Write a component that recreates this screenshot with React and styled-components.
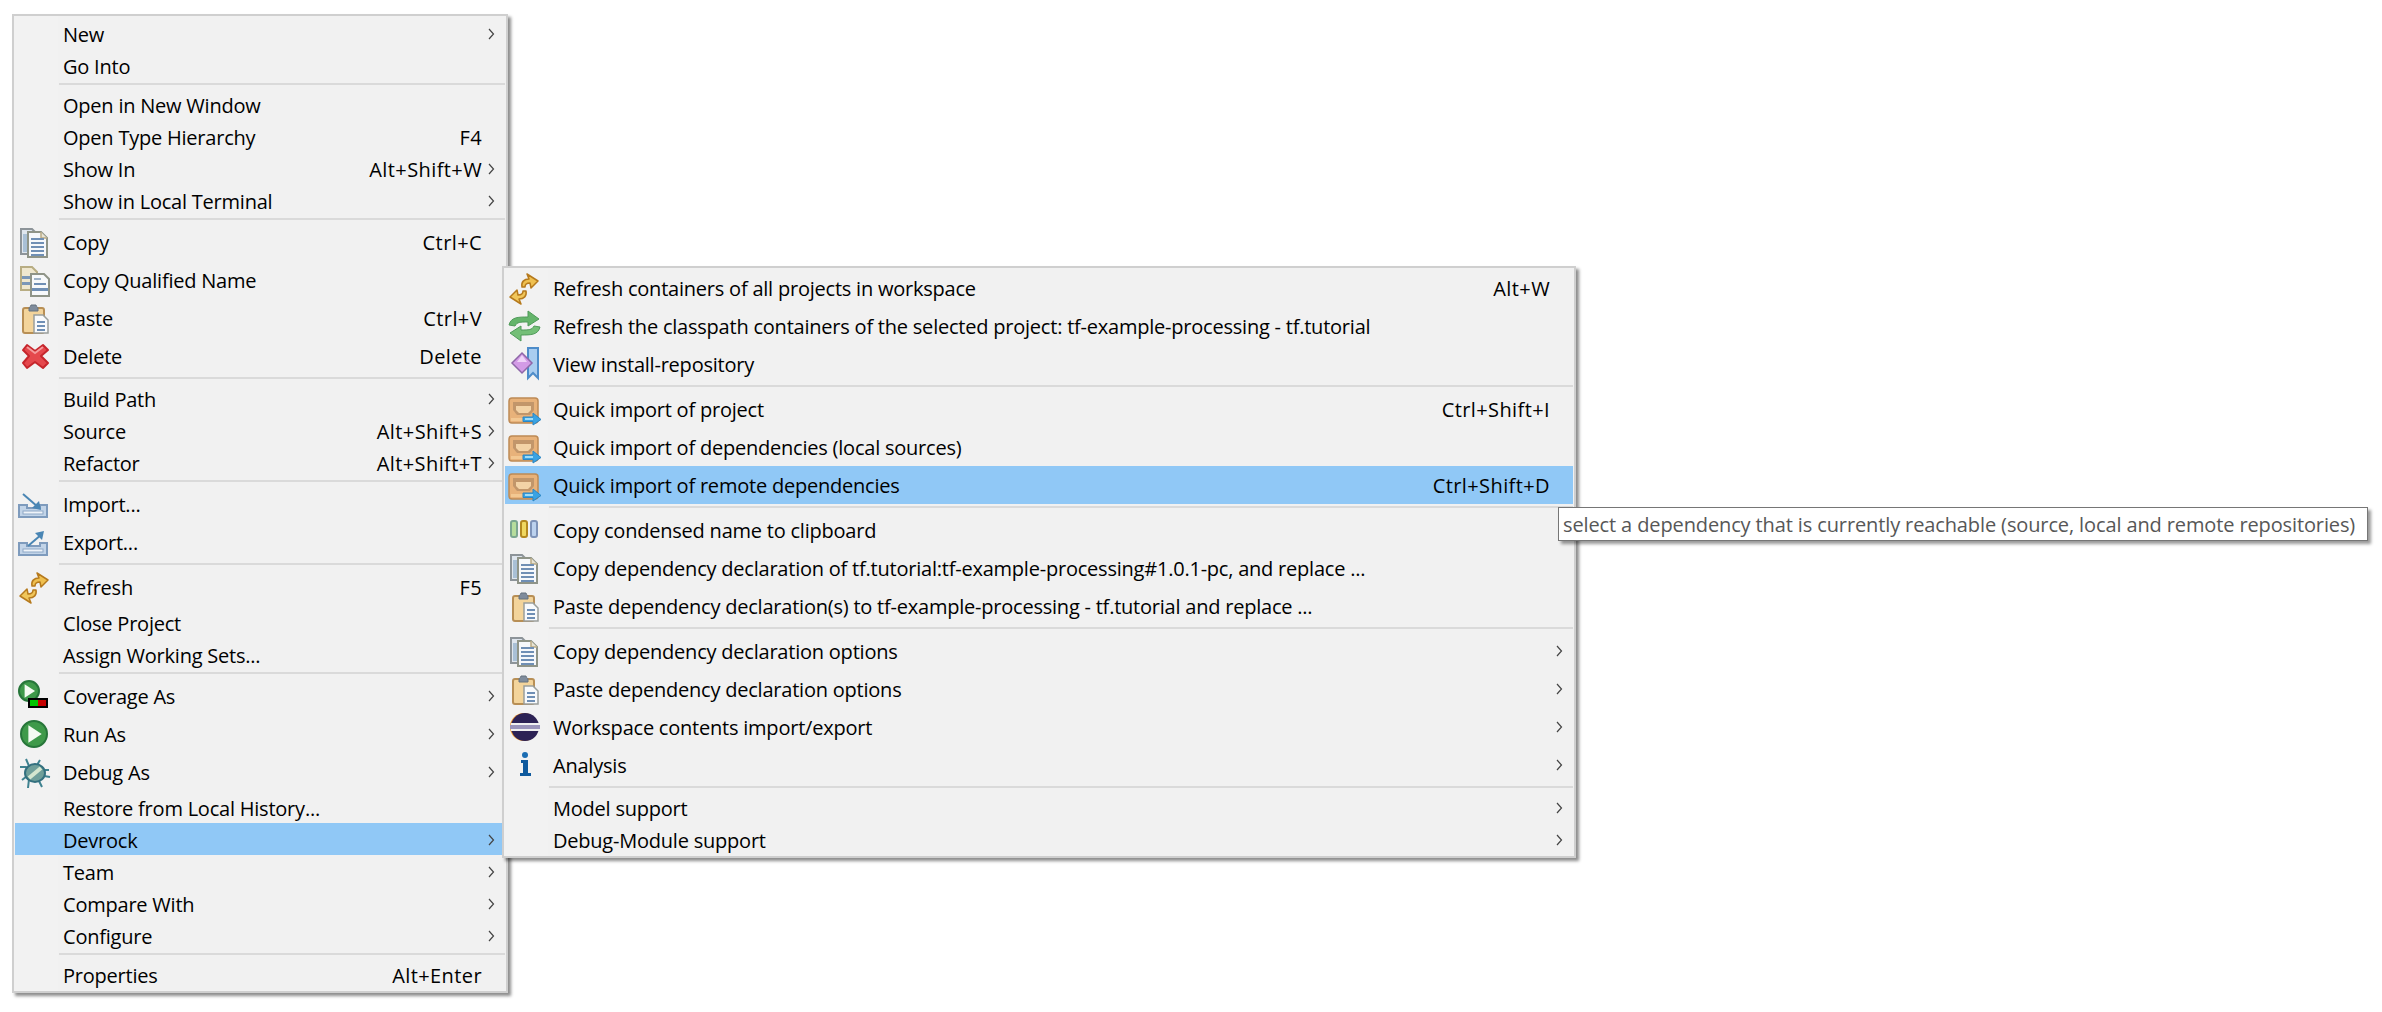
import styled, { createGlobalStyle } from 'styled-components'

const GlobalStyle = createGlobalStyle`
  html, body {
    margin: 0;
    background: #fff;
  }
  body {
    font-family: "Open Sans", "Liberation Sans", sans-serif;
    color: #000;
  }
`

const Page = styled.div`
  position: relative;
  width: 2382px;
  height: 1012px;
  padding: 14px 0 0 12px;
  box-sizing: border-box;
  overflow: hidden;
`

const MenuBox = styled.div`
  box-sizing: border-box;
  width: ${(p) => p.$width}px;
  border: 2px solid #cfcfcf;
  padding: 1px;
  background: linear-gradient(90deg, #f2f2f2 44px, #f1f1f1 44px);
  box-shadow: 3px 3px 3px rgba(0, 0, 0, 0.45);
`

const SubMenu = styled(MenuBox)`
  position: absolute;
  left: 502px;
  top: 266px;
`

const Row = styled.div`
  display: grid;
  grid-template-columns: 48px 1fr auto 23px;
  align-items: center;
  height: ${(p) => (p.$tall ? 38 : 32)}px;
  background: ${(p) => (p.$active ? '#90c8f6' : 'transparent')};
  font-size: 20px;
  letter-spacing: -0.22px;
  white-space: nowrap;
`

const Label = styled.span`
  padding-top: ${(p) => (p.$tall ? 1 : 0)}px;
`

const IconSlot = styled.div`
  display: flex;
  padding-left: 3px;
  height: 34px;
`

const Shortcut = styled.span`
  text-align: right;
  letter-spacing: 0.4px;
  padding-top: ${(p) => (p.$tall ? 1 : 0)}px;
`

const ArrowCell = styled.div`
  display: flex;
  align-items: center;
  padding-left: 6px;
`

const Separator = styled.div`
  height: 2px;
  margin: 2px 0 3px 44px;
  background: #dadada;
`

const Tooltip = styled.div`
  position: absolute;
  left: 1558px;
  top: 507px;
  box-sizing: border-box;
  width: 810px;
  height: 34px;
  padding-left: 4px;
  display: flex;
  align-items: center;
  border: 1px solid #767676;
  background: #fff;
  color: #575757;
  font-size: 20px;
  letter-spacing: -0.12px;
  white-space: nowrap;
  box-shadow: 3px 3px 3px rgba(0, 0, 0, 0.4);
`

const Arrow = () => (
  <svg width="7" height="12" viewBox="0 0 7 12">
    <path d="M1 1 L5.5 6 L1 11" fill="none" stroke="#444" strokeWidth="1.2" />
  </svg>
)

const Svg = ({ children }) => (
  <svg width="34" height="34" viewBox="0 0 34 34">
    {children}
  </svg>
)

const Lines = ({ x, y, w, n, gap = 4 }) => (
  <>
    {Array.from({ length: n }).map((_, i) => (
      <rect key={i} x={x} y={y + i * gap} width={w} height="2" fill="#6f8fb5" />
    ))}
  </>
)

const CopyIcon = () => (
  <Svg>
    <path d="M3 4H14L17 7V29H3Z" fill="#dfe6ee" stroke="#8d9499" strokeWidth="2" />
    <rect x="5" y="9" width="4" height="18" fill="#a9c0d6" />
    <path d="M10 7H23L29 13V32H10Z" fill="#f6f8fb" stroke="#8f9488" strokeWidth="2" />
    <path d="M23 7V13H29" fill="#e8e3d2" stroke="#b9ab85" strokeWidth="1.5" />
    <Lines x={13} y={13} w={13} n={5} />
  </Svg>
)

const QualifiedIcon = () => (
  <Svg>
    <path d="M3 4H14L19 9V27H3Z" fill="#efe7cf" stroke="#b8ad83" strokeWidth="2" />
    <rect x="4" y="13" width="14" height="3" fill="#7b97b8" />
    <rect x="4" y="19" width="14" height="3" fill="#7b97b8" />
    <path d="M13 11H26L31 16V33H13Z" fill="#f7f9fb" stroke="#8f9488" strokeWidth="2" />
    <rect x="16" y="20" width="12" height="2" fill="#6f8fb5" />
    <rect x="14" y="25" width="16" height="3" fill="#6f8fb5" />
    <rect x="16" y="15" width="7" height="2" fill="#9fb2c6" />
  </Svg>
)

const PasteIcon = () => (
  <Svg>
    <rect x="5" y="7" width="21" height="25" rx="2" fill="#f3d49b" stroke="#b88f55" strokeWidth="2" />
    <path d="M11 8C11 5 13 6 13 4H18C18 6 20 5 20 8V10H11Z" fill="#7f8c9c" stroke="#66727f" strokeWidth="1" />
    <path d="M16 14H25L30 19V32H16Z" fill="#f8fafc" stroke="#9a9f9c" strokeWidth="1.5" />
    <Lines x={19} y={20} w={8} n={3} gap={4} />
  </Svg>
)

const DeleteIcon = () => (
  <Svg>
    <path
      d="M9 6L17 12L25 6L30 11L23 17L30 24L25 29L17 23L9 29L5 24L11 17L5 11Z"
      fill="#e5484d"
      stroke="#c6262c"
      strokeWidth="2"
      strokeLinejoin="round"
    />
    <path d="M9 8L17 14L25 8" fill="none" stroke="#f59a9c" strokeWidth="2" />
  </Svg>
)

const Tray = () => (
  <>
    <path d="M1 18H9V21H22V18H29V30H1Z" fill="#c2d4e8" stroke="#7e9bbd" strokeWidth="2" />
    <rect x="5" y="24" width="20" height="3" fill="#eef3f9" stroke="#8ea8c6" strokeWidth="1" />
  </>
)

const ImportIcon = () => (
  <Svg>
    <Tray />
    <path d="M5 7L20 20" stroke="#4a86b4" strokeWidth="2" />
    <path d="M23 23L14 21L21 14Z" fill="#4a86b4" />
  </Svg>
)

const ExportIcon = () => (
  <Svg>
    <Tray />
    <path d="M10 21L24 9" stroke="#4a86b4" strokeWidth="2" />
    <path d="M26 6L24 15L17 8Z" fill="#4a86b4" />
  </Svg>
)

const RefreshIcon = () => {
  const arrow = 'M14 16C13 11 16 8 21 8L19 3L30 10L23 17L22 12C19 12 17 13 17 16Z'
  return (
    <Svg>
      <path d={arrow} fill="#efc050" stroke="#b67a1d" strokeWidth="1.5" strokeLinejoin="round" />
      <path
        d={arrow}
        transform="rotate(180 16 18)"
        fill="#f0c65a"
        stroke="#b67a1d"
        strokeWidth="1.5"
        strokeLinejoin="round"
      />
    </Svg>
  )
}

const GreenRefreshIcon = () => (
  <Svg>
    <path d="M1 16C3 8 10 8 20 8V2L31 10L20 17V13C12 13 9 13 7 17Z" fill="#65b56b" stroke="#4f9a59" strokeWidth="1" />
    <path d="M32 18C30 26 23 26 13 26V32L2 24L13 17V21C21 21 24 21 26 17Z" fill="#74bf77" stroke="#4f9a59" strokeWidth="1" />
  </Svg>
)

const PlayCircle = ({ cx, cy, r }) => (
  <>
    <circle cx={cx} cy={cy} r={r - 1} fill="#3f9a4a" stroke="#27763a" strokeWidth="2" />
    <path d={`M${cx - r * 0.4} ${cy - r * 0.62}L${cx + r * 0.55} ${cy}L${cx - r * 0.4} ${cy + r * 0.62}Z`} fill="#f4fbf2" />
  </>
)

const CoverageIcon = () => (
  <Svg>
    <PlayCircle cx={11} cy={12} r={11} />
    <rect x="10" y="19" width="20" height="10" fill="#000" />
    <rect x="12" y="21" width="8" height="6" fill="#00c400" />
    <rect x="20" y="21" width="8" height="6" fill="#c40000" />
  </Svg>
)

const RunIcon = () => (
  <Svg>
    <PlayCircle cx={16} cy={17} r={14} />
  </Svg>
)

const DebugIcon = () => (
  <Svg>
    <g stroke="#3f8290" strokeWidth="2" fill="none">
      <path d="M8 4L11 11M2 12H8L11 15M4 25L9 21M11 24L10 33" />
      <path d="M22 5L19 10M31 15H26L24 16M32 22L26 21M21 26L24 32" />
    </g>
    <ellipse cx="17" cy="18" rx="10" ry="9" fill="#6f9f9a" stroke="#33707f" strokeWidth="2" />
    <path d="M11 23L23 13" stroke="#d4e6cf" strokeWidth="4" />
  </Svg>
)

const ViewIcon = () => (
  <Svg>
    <path d="M20 1H30V31L25 26L20 31Z" fill="#a9cdf0" stroke="#4d8cc9" strokeWidth="2" />
    <path d="M14 6L24 16L14 26L4 16Z" fill="#d39be6" stroke="#8e67a8" strokeWidth="1.5" />
    <path d="M14 8L19 15H9Z" fill="#efd4f7" />
  </Svg>
)

const QuickImportIcon = () => (
  <Svg>
    <rect x="1" y="6" width="29" height="25" rx="3" fill="#e8b27a" stroke="#bd8a55" strokeWidth="1.5" />
    <path d="M5 10H26V18L22 23H9L5 18Z" fill="#c2966a" />
    <path d="M8 14H23V18L20 21H11L8 18Z" fill="#f3d3a6" />
    <rect x="3" y="26" width="14" height="3" fill="#f3c892" />
    <path d="M15 25H25V21L33 27.5L25 33V29.5H15Z" fill="#3aa3e3" stroke="#2b86c4" strokeWidth="1" />
    <rect x="17" y="26" width="8" height="2" fill="#9fdcf7" />
  </Svg>
)

const CondensedIcon = () => (
  <Svg>
    <rect x="3" y="8" width="6" height="16" rx="2" fill="#b6dd9c" stroke="#7ba68f" strokeWidth="2" />
    <rect x="13" y="8" width="6" height="16" rx="2" fill="#f0d860" stroke="#b4891f" strokeWidth="2" />
    <rect x="23" y="8" width="6" height="16" rx="2" fill="#bcd2ee" stroke="#7e93b8" strokeWidth="2" />
  </Svg>
)

const EclipseIcon = () => (
  <Svg>
    <circle cx="16" cy="17" r="14" fill="#f29a2e" />
    <circle cx="17" cy="17" r="14" fill="#2c2255" />
    <rect x="3" y="13" width="28" height="2" fill="#f0f0f0" />
    <rect x="2" y="15" width="30" height="4" fill="#9a94ba" />
    <rect x="3" y="19" width="28" height="2" fill="#f0f0f0" />
  </Svg>
)

const InfoIcon = () => (
  <Svg>
    <circle cx="17" cy="7" r="3" fill="#1c6db2" />
    <path d="M13 12H20V25H23V28H12V25H15V15H13Z" fill="#0f5a9e" />
  </Svg>
)

const rootItems = [
  { label: 'New', more: true },
  { label: 'Go Into' },
  'sep',
  { label: 'Open in New Window' },
  { label: 'Open Type Hierarchy', keys: 'F4' },
  { label: 'Show In', keys: 'Alt+Shift+W', more: true },
  { label: 'Show in Local Terminal', more: true },
  'sep',
  { label: 'Copy', keys: 'Ctrl+C', icon: CopyIcon },
  { label: 'Copy Qualified Name', icon: QualifiedIcon },
  { label: 'Paste', keys: 'Ctrl+V', icon: PasteIcon },
  { label: 'Delete', keys: 'Delete', icon: DeleteIcon },
  'sep',
  { label: 'Build Path', more: true },
  { label: 'Source', keys: 'Alt+Shift+S', more: true },
  { label: 'Refactor', keys: 'Alt+Shift+T', more: true },
  'sep',
  { label: 'Import...', icon: ImportIcon },
  { label: 'Export...', icon: ExportIcon },
  'sep',
  { label: 'Refresh', keys: 'F5', icon: RefreshIcon },
  { label: 'Close Project' },
  { label: 'Assign Working Sets...' },
  'sep',
  { label: 'Coverage As', more: true, icon: CoverageIcon },
  { label: 'Run As', more: true, icon: RunIcon },
  { label: 'Debug As', more: true, icon: DebugIcon },
  { label: 'Restore from Local History...' },
  { label: 'Devrock', more: true, active: true },
  { label: 'Team', more: true },
  { label: 'Compare With', more: true },
  { label: 'Configure', more: true },
  'sep',
  { label: 'Properties', keys: 'Alt+Enter' }
]

const devrockItems = [
  { label: 'Refresh containers of all projects in workspace', keys: 'Alt+W', icon: RefreshIcon },
  { label: 'Refresh the classpath containers of the selected project: tf-example-processing - tf.tutorial', icon: GreenRefreshIcon },
  { label: 'View install-repository', icon: ViewIcon },
  'sep',
  { label: 'Quick import of project', keys: 'Ctrl+Shift+I', icon: QuickImportIcon },
  { label: 'Quick import of dependencies (local sources)', icon: QuickImportIcon },
  { label: 'Quick import of remote dependencies', keys: 'Ctrl+Shift+D', icon: QuickImportIcon, active: true },
  'sep',
  { label: 'Copy condensed name to clipboard', icon: CondensedIcon },
  { label: 'Copy dependency declaration of tf.tutorial:tf-example-processing#1.0.1-pc, and replace ...', icon: CopyIcon },
  { label: 'Paste dependency declaration(s) to tf-example-processing - tf.tutorial and replace ...', icon: PasteIcon },
  'sep',
  { label: 'Copy dependency declaration options', more: true, icon: CopyIcon },
  { label: 'Paste dependency declaration options', more: true, icon: PasteIcon },
  { label: 'Workspace contents import/export', more: true, icon: EclipseIcon },
  { label: 'Analysis', more: true, icon: InfoIcon },
  'sep',
  { label: 'Model support', more: true },
  { label: 'Debug-Module support', more: true }
]

function MenuItems({ items }) {
  return items.map((item, i) => {
    if (item === 'sep') return <Separator key={i} />
    const Icon = item.icon
    return (
      <Row key={i} $tall={!!Icon} $active={item.active}>
        <IconSlot>{Icon && <Icon />}</IconSlot>
        <Label $tall={!!Icon}>{item.label}</Label>
        <Shortcut $tall={!!Icon}>{item.keys}</Shortcut>
        <ArrowCell>{item.more && <Arrow />}</ArrowCell>
      </Row>
    )
  })
}

export default function App() {
  return (
    <Page>
      <GlobalStyle />
      <MenuBox $width={496}>
        <MenuItems items={rootItems} />
      </MenuBox>
      <SubMenu $width={1074}>
        <MenuItems items={devrockItems} />
      </SubMenu>
      <Tooltip>select a dependency that is currently reachable (source, local and remote repositories)</Tooltip>
    </Page>
  )
}
